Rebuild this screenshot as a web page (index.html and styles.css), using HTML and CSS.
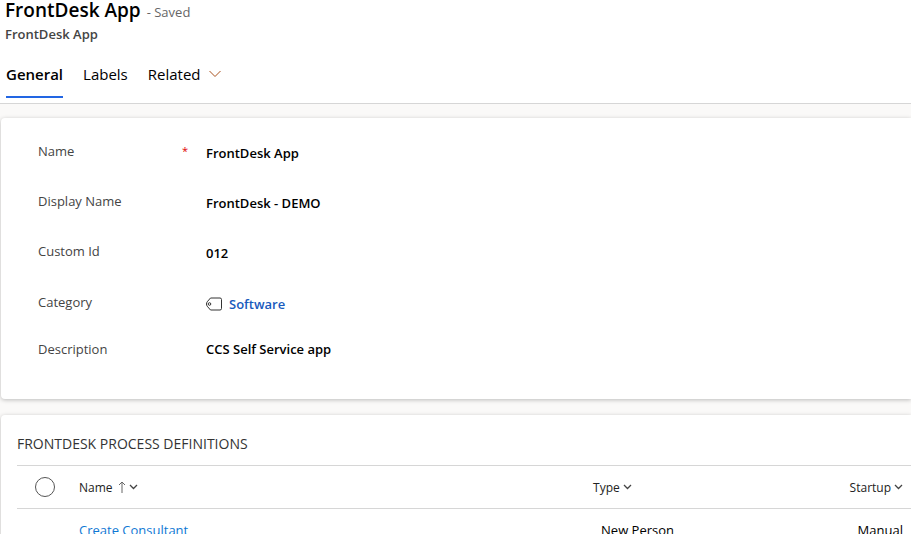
FILE: index.html
```html
<!DOCTYPE html>
<html lang="en">
<head>
    <meta charset="UTF-8">
    <meta name="viewport" content="width=device-width, initial-scale=1.0">
    <title>FrontDesk App</title>
    <link rel="stylesheet" href="styles.css">
</head>
<body>
    <header class="record-header">
        <div class="title-row">
            <h1>FrontDesk App</h1>
            <span class="save-status">- Saved</span>
        </div>
        <p class="entity-name">FrontDesk App</p>
        <nav class="tabs">
            <button type="button" class="tab active">General</button>
            <button type="button" class="tab">Labels</button>
            <button type="button" class="tab">Related
                <svg class="tab-chevron" width="12" height="8" viewBox="0 0 12 8"><path d="M0.5 1 L6 6.5 L11.5 1"/></svg>
            </button>
        </nav>
    </header>

    <main>
        <form class="card details">
            <div class="field">
                <label for="name">Name <span class="required">*</span></label>
                <input type="text" id="name" value="FrontDesk App">
            </div>
            <div class="field">
                <label for="displayName">Display Name</label>
                <input type="text" id="displayName" value="FrontDesk - DEMO">
            </div>
            <div class="field">
                <label for="customId">Custom Id</label>
                <input type="text" id="customId" value="012">
            </div>
            <div class="field category">
                <span class="label">Category</span>
                <a href="#" class="lookup">
                    <svg width="17" height="14" viewBox="0 0 17 14">
                        <path d="M4.5 1 H14 Q15.5 1 15.5 2.5 V11.5 Q15.5 13 14 13 H4.5 L1.2 9.2 Q0.5 8.2 0.5 7 Q0.5 5.8 1.2 4.8 Z"/>
                        <circle cx="3.5" cy="7" r="1.3"/>
                    </svg>
                    Software
                </a>
            </div>
            <div class="field last">
                <label for="description">Description</label>
                <input type="text" id="description" value="CCS Self Service app">
            </div>
        </form>

        <section class="card definitions">
            <h2>FRONTDESK PROCESS DEFINITIONS</h2>
            <table>
                <thead>
                    <tr>
                        <th class="col-select"><input type="checkbox" aria-label="Select all rows"></th>
                        <th class="col-name">
                            <button type="button" class="sort">Name
                                <svg class="sort-arrow" width="8" height="12" viewBox="0 0 8 12"><path d="M4 12 V1 M1 4 L4 1 L7 4"/></svg>
                                <svg class="chevron" width="9" height="6" viewBox="0 0 9 6"><path d="M1 1 L4.5 4.5 L8 1"/></svg>
                            </button>
                        </th>
                        <th class="col-type">
                            <button type="button" class="sort">Type
                                <svg class="chevron" width="9" height="6" viewBox="0 0 9 6"><path d="M1 1 L4.5 4.5 L8 1"/></svg>
                            </button>
                        </th>
                        <th>
                            <button type="button" class="sort">Startup
                                <svg class="chevron" width="9" height="6" viewBox="0 0 9 6"><path d="M1 1 L4.5 4.5 L8 1"/></svg>
                            </button>
                        </th>
                    </tr>
                </thead>
                <tbody>
                    <tr>
                        <td></td>
                        <td><a href="#">Create Consultant</a></td>
                        <td class="option">New Person</td>
                        <td class="option">Manual</td>
                    </tr>
                </tbody>
            </table>
        </section>
    </main>
</body>
</html>
```
FILE: styles.css
```css
* {
    margin: 0;
    padding: 0;
    box-sizing: border-box;
}

body {
    font-family: 'Segoe UI', 'Open Sans', 'Noto Sans', sans-serif;
    font-size: 13px;
    background: #faf9f8;
    color: #000;
    height: 100vh;
    overflow: hidden;
}

button,
input {
    font: inherit;
    color: inherit;
    background: none;
    border: none;
}

button {
    cursor: pointer;
}

a {
    text-decoration: none;
}

svg {
    fill: none;
    stroke: #444;
    flex-shrink: 0;
}

/* Header */
.record-header {
    background: #fff;
    border-bottom: 1px solid #d6d6d6;
    padding: 0 5px;
}

.title-row {
    display: flex;
    align-items: center;
    gap: 6px;
    height: 22px;
}

h1 {
    font-size: 19px;
    font-weight: 600;
    line-height: 20px;
    padding-bottom: 2px;
}

.save-status {
    color: #666;
    line-height: 20px;
    padding-top: 2px;
}

.entity-name {
    color: #444;
    font-weight: 600;
    line-height: 24px;
}

.tabs {
    display: flex;
    gap: 20px;
    padding: 6px 1px 0;
    margin-bottom: 5px;
}

.tab {
    display: flex;
    align-items: center;
    gap: 8px;
    height: 46px;
    font-size: 15px;
    border-bottom: 2px solid transparent;
}

.tab.active {
    font-weight: 600;
    border-bottom-color: #2266e3;
}

.tab-chevron {
    stroke: #a8501c;
}

/* Cards */
main {
    display: flex;
    flex-direction: column;
    gap: 16px;
    padding: 14px 0 0 1px;
}

.card {
    background: #fff;
    border-radius: 4px 0 0 4px;
    box-shadow: 0 1px 4px rgba(0, 0, 0, 0.25);
}

.details {
    padding: 10px 37px 32px;
}

.field {
    display: grid;
    grid-template-columns: 168px 1fr;
    align-items: center;
    height: 50px;
}

.field label,
.field .label {
    display: flex;
    justify-content: space-between;
    color: #444;
    line-height: 20px;
    padding: 0 18px 4px 0;
}

.field input,
.lookup {
    width: 100%;
    font-weight: 600;
    line-height: 20px;
}

.field input:focus {
    outline: 1px solid #2266e3;
}

.category {
    height: 52px;
}

.last {
    height: 37px;
}

.last label {
    padding-bottom: 0;
}

.required {
    color: #e00000;
    font-size: 11px;
}

.lookup {
    display: flex;
    align-items: center;
    gap: 6px;
    color: #185abd;
}

.lookup svg {
    stroke: #333;
}

/* Process definitions */
.definitions {
    padding: 18px 0 0 16px;
}

h2 {
    color: #333;
    font-size: 14px;
    font-weight: 400;
    line-height: 22px;
    padding-bottom: 10px;
}

table {
    width: 100%;
    table-layout: fixed;
    border-collapse: collapse;
}

th {
    height: 43px;
    border-top: 1px solid #d6d6d6;
    border-bottom: 1px solid #d6d6d6;
    font-weight: 400;
    text-align: left;
    vertical-align: middle;
}

td {
    height: 42px;
}

td a {
    color: #0f78d4;
}

.col-select {
    width: 62px;
    padding-left: 18px;
}

.col-name {
    width: 57.5%;
}

.col-type {
    width: 28.7%;
}

.option {
    padding-left: 8px;
}

input[type="checkbox"] {
    appearance: none;
    display: block;
    width: 20px;
    height: 20px;
    border: 1px solid #555;
    border-radius: 50%;
}

.sort {
    display: flex;
    align-items: center;
    gap: 3px;
    color: #222;
    font-size: 12px;
    white-space: nowrap;
}

.sort-arrow {
    stroke: #666;
    margin-left: 2px;
}

.chevron {
    stroke-width: 1.3;
}
```
